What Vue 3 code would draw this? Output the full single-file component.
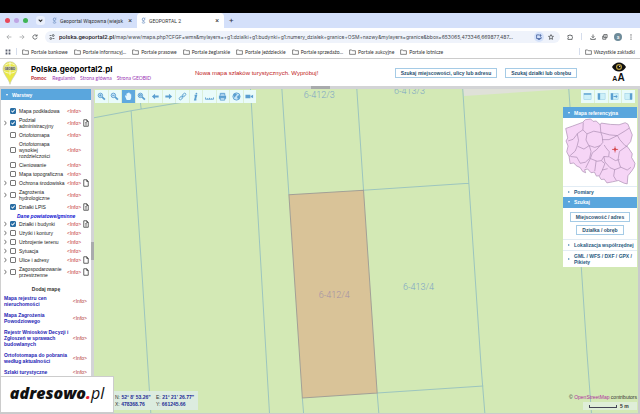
<script setup>
import { ref } from 'vue'

const bookmarks = [
  'Portale bankowe', 'Portale informacyj...', 'Portale prasowe', 'Portale żeglarskie',
  'Portale jeździeckie', 'Portale sprzedażo...', 'Portale aukcyjne', 'Portale lotnicze'
]
const url = 'polska.geoportal2.pl/map/www/mapa.php?CFGF=wms&mylayers=+g1:dzialki+g1:budynki+g1:numery_dzialek+granice+OSM+nazwy&mylayers=granice&bbox=653065,473346,669877,487...'
const urlHost = url.slice(0, 20)
const urlPath = url.slice(20)

const layers = ref([
  { name: 'Mapa podkładowa', on: true },
  { name: 'Podział\nadministracyjny', on: true, more: true, doc: 'full' },
  { name: 'Ortofotomapa', on: false },
  { name: 'Ortofotomapa\nwysokiej\nrozdzielczości', on: false },
  { name: 'Cieniowanie', on: false },
  { name: 'Mapa topograficzna', on: false },
  { name: 'Ochrona środowiska', on: false, more: true, doc: 'empty' },
  { name: 'Zagrożenia\nhydrologiczne', on: false, more: true },
  { name: 'Działki LPIS', on: true, doc: 'full' },
  { heading: 'Dane powiatowe/gminne' },
  { name: 'Działki i budynki', on: true, more: true, doc: 'full' },
  { name: 'Użytki i kontury', on: false, more: true },
  { name: 'Uzbrojenie terenu', on: false, more: true },
  { name: 'Sytuacja', on: false, more: true },
  { name: 'Ulice i adresy', on: false, more: true, doc: 'empty' },
  { name: 'Zagospodarowanie\nprzestrzenne', on: false, more: true, doc: 'empty' }
])

const extraMaps = [
  'Mapa rejestru cen\nnieruchomości',
  'Mapa Zagrożenia\nPowodziowego',
  'Rejestr Wniosków Decyzji i\nZgłoszeń w sprawach\nbudowlanych',
  'Ortofotomapa do pobrania\nwedług aktualności',
  'Szlaki turystyczne'
]

const tools = ['zoomin', 'zoomout', 'pan', 'zoombox', 'back', 'forward', 'link', 'info', 'measure', 'print', 'globe', 'video']
const activeTool = ref('pan')
const views = ['top', 'left', 'export', 'right']
</script>

<template>
  <div class="screen">
    <div class="bezel"></div>

    <div class="tabs">
      <div class="lights"><i class="red"></i><i class="lilac"></i><i class="green"></i></div>
      <button class="tablist" aria-label="Karty">
        <svg viewBox="0 0 10 10"><path d="M3 4l2 2 2-2" fill="none" stroke="#333" stroke-width="1.2" /></svg>
      </button>
      <div class="tab">
        <svg class="fav" viewBox="0 0 8 10"><circle cx="4" cy="3" r="2" /><path d="M6 1h1M3 5c-2 2 3 1 3 3s-5 1.500-4-.5" /></svg>
        <span class="tabname">Geoportal Wiązowna (wiejsk</span>
        <button class="close" aria-label="Zamknij">×</button>
      </div>
      <div class="tab active">
        <svg class="fav" viewBox="0 0 8 10"><circle cx="4" cy="3" r="2" /><path d="M6 1h1M3 5c-2 2 3 1 3 3s-5 1.500-4-.5" /></svg>
        <span class="tabname">GEOPORTAL 2</span>
        <button class="close" aria-label="Zamknij">×</button>
      </div>
      <button class="newtab" aria-label="Nowa karta">+</button>
    </div>

    <div class="address">
      <button class="nav dim" aria-label="Wstecz"><svg viewBox="0 0 10 10"><path d="M9 5H1.500M5 1.500L1.500 5 5 8.500" /></svg></button>
      <button class="nav dim" aria-label="Dalej"><svg viewBox="0 0 10 10"><path d="M1 5h7.500M5 1.500L8.500 5 5 8.500" /></svg></button>
      <button class="nav" aria-label="Odśwież"><svg viewBox="0 0 10 10"><path d="M8.500 6A3.600 3.600 0 1 1 8 3M8.500 .8v2.700H5.800" /></svg></button>
      <div class="pill">
        <svg class="tune" viewBox="0 0 10 10"><path d="M1 2.500h3M6 7.500h3" /><circle cx="7" cy="2.500" r="1.500" /><circle cx="3" cy="7.500" r="1.500" /></svg>
        <div class="url"><b>{{ urlHost }}</b>{{ urlPath }}</div>
        <span class="halo"><svg viewBox="0 0 10 10"><path d="M6 1.500H1v6h7.500V5M3 9.300h4M7.500 .5v3M6 2.500l1.500 1.500L9 2.500" /></svg></span>
        <svg class="star" viewBox="0 0 10 10"><path d="M5 1l1.200 2.700 2.900.3-2.200 2 .7 2.900L5 7.400 2.400 8.900l.7-2.900-2.200-2 2.900-.3z" /></svg>
      </div>
      <div class="actions">
        <svg viewBox="0 0 10 10"><path d="M1.500 2.500h2.300a1.200 1.200 0 0 1 2.400 0h2.300v2.200a1.200 1.200 0 0 1 0 2.200V9h-7V6.800a1.200 1.200 0 0 0 0-2.200z" /></svg>
        <i class="bar"></i>
        <svg viewBox="0 0 10 10"><path d="M5 .8v5M2.800 4L5 6.200 7.200 4M1.200 6.800V9h7.600V6.800" /></svg>
        <svg viewBox="0 0 10 10"><path d="M3 1h5.500v5H3zM6.500 6v2.700H1.200V3.500H3M4.500 3.500h2.500" /></svg>
        <span class="avatar">a</span>
        <svg viewBox="0 0 10 10" class="dots"><circle cx="5" cy="1.500" r="1" /><circle cx="5" cy="5" r="1" /><circle cx="5" cy="8.500" r="1" /></svg>
      </div>
    </div>

    <nav class="bookmarks">
      <svg class="apps" viewBox="0 0 10 10"><path d="M1 1h3v3H1zM6 1h3v3H6zM1 6h3v3H1zM6 6h3v3H6z" /></svg>
      <i class="bar"></i>
      <a v-for="b in bookmarks" :key="b" href="#">
        <svg viewBox="0 0 12 10"><path d="M1 1.500h3.500l1.200 1.300H11V9H1z" /></svg>{{ b }}
      </a>
      <i class="bar last"></i>
      <a href="#"><svg viewBox="0 0 12 10"><path d="M1 1.500h3.500l1.200 1.300H11V9H1z" /></svg>Wszystkie zakładki</a>
    </nav>

    <header class="site">
      <svg class="pin" viewBox="0 0 48 72">
        <path d="M24 70C20 52 3 40 3 23a21 21 0 0 1 42 0c0 17-17 29-21 47z" fill="#e9e843" stroke="#c9cbb4" stroke-width="2" />
        <path d="M8 14c8-8 24-9 32 0M7 31c9 7 25 7 34 0M24 3v40" fill="none" stroke="#f8f8c8" stroke-width="3" />
        <rect x="7" y="16" width="34" height="12" fill="#d8d9b4" />
        <text x="24" y="26" text-anchor="middle">GEOBID</text>
      </svg>
      <div class="brand">
        <h1>Polska.geoportal2.pl</h1>
        <div class="links">
          <a class="help" href="#">Pomoc</a><a href="#">Regulamin</a><a href="#">Strona główna</a><a href="#">Strona GEOBID</a>
        </div>
      </div>
      <a class="news" href="#">Nowa mapa szlaków turystycznych. Wypróbuj!</a>
      <div class="searches">
        <button class="box">Szukaj miejscowości, ulicy lub adresu</button>
        <button class="box">Szukaj działki lub obrębu</button>
      </div>
      <div class="access">
        <svg viewBox="0 0 42 28"><path d="M0 14C10-4 32-4 42 14 32 32 10 32 0 14z" fill="#111" /><circle cx="21" cy="14" r="9" fill="#b89b3c" /><circle cx="21" cy="14" r="5.500" fill="#111" /><circle cx="23" cy="12" r="2" fill="#fff" /></svg>
        <span><small>A</small>A</span>
      </div>
    </header>
    <div class="split-h"><i></i></div>

    <main>
      <aside>
        <div class="bluebar">Warstwy</div>
        <div class="layers">
          <template v-for="(l, i) in layers" :key="i">
            <div v-if="l.heading" class="heading">{{ l.heading }}</div>
            <div v-else class="layer">
              <button v-if="l.more" class="more" aria-label="Rozwiń"><svg viewBox="0 0 4 8"><path d="M.5 1L3 4 .5 7" /></svg></button>
              <input :id="'l' + i" v-model="l.on" type="checkbox">
              <label :for="'l' + i">{{ l.name }}</label>
              <a class="info" href="#">&lt;Info&gt;</a>
              <svg v-if="l.doc" class="doc" viewBox="0 0 12 16"><path d="M1.500 1.500h6l3 3.500v9.500h-9zM7.500 1.500V5h3" /><path v-if="l.doc === 'full'" class="rows" d="M4 7h4M4 9.500h4M4 12h4" /></svg>
            </div>
          </template>
        </div>
        <h2>Dodaj mapę</h2>
        <div class="extras">
          <div v-for="m in extraMaps" :key="m" class="extra">
            <a href="#">{{ m }}</a><a class="info" href="#">&lt;Info&gt;</a>
          </div>
        </div>
      </aside>
      <div class="split-v"><i></i></div>

      <section class="map">
        <svg class="parcels" viewBox="94 89 544 323" preserveAspectRatio="xMinYMin slice">
          <path d="M461.500 89H567L463 96z" fill="#dfe1d8" />
          <path d="M288.300 194.300L362.700 190 376.300 392 301.700 397z" fill="#d9c398" />
          <g class="lines">
            <path d="M94 117.700L131 110.700 190 101M140 100L141 109M131 110.700L136 185 142.300 280 150.700 413" />
            <path d="M250 89L255.700 185 269 413M281.300 89L288.300 194.300" />
            <path d="M356 89L362.700 190 467.700 183M461.600 89L467.700 183 480 367 483.700 413" />
            <path d="M301.700 397L303 413M376.300 392L378 413M376.300 392L482 385" />
            <path d="M567.300 89L580 270 585.300 350 590 413" />
          </g>
          <path d="M288.300 194.300L362.700 190 376.300 392 301.700 397z" fill="none" stroke="#a2a096" />
          <g class="numbers">
            <text x="303" y="98">6-412/3</text>
            <text x="393" y="94">6-413/3</text>
            <text x="402" y="289">6-413/4</text>
            <text x="318" y="297" class="own">6-412/4</text>
          </g>
        </svg>

        <div class="toolbar">
          <button v-for="t in tools" :key="t" :class="{ on: t === activeTool }" :aria-label="t" @click="activeTool = t">
            <svg viewBox="0 0 20 20">
              <template v-if="t.startsWith('zoom')">
                <path d="M11 11l6.500 6" class="thick" /><circle cx="7.500" cy="7.500" r="5" fill="#c9e6f8" />
                <path v-if="t === 'zoomin'" d="M5 7.500h5M7.500 5v5" /><path v-else-if="t === 'zoomout'" d="M5 7.500h5" /><path v-else d="M5.500 6h4v3h-4z" />
              </template>
              <path v-else-if="t === 'pan'" class="hand" d="M6 18L3 11 2 8l2-.5 1.500 2V3.500h2V2h2.200V1h2.300v2h2v2h2v8l-2 5z" />
              <path v-else-if="t === 'back'" class="solid" d="M2 10l7-6v4h8v4H9v4z" />
              <path v-else-if="t === 'forward'" class="solid" d="M18 10l-7-6v4H3v4h8v4z" />
              <g v-else-if="t === 'link'"><ellipse cx="6.500" cy="13.500" rx="4.500" ry="2.800" transform="rotate(-45 6.500 13.500)" /><ellipse cx="13.500" cy="6.500" rx="4.500" ry="2.800" transform="rotate(-45 13.500 6.500)" /><path d="M8 12l4-4" /></g>
              <g v-else-if="t === 'info'"><circle cx="12" cy="3.500" r="2" class="solid" /><path d="M8 8h3.500L9 17h3" class="thick" /></g>
              <path v-else-if="t === 'measure'" d="M1 12v4h18v-4M5.500 14v2M10 13v3M14.500 14v2" />
              <g v-else-if="t === 'print'"><path class="solid" d="M2 8h16v7H2z" /><path d="M5 8V3h10v5" fill="#a8d0ee" /><path d="M5 13h10v5H5z" fill="#d9f0fb" /></g>
              <g v-else-if="t === 'globe'"><circle cx="10" cy="10" r="8" fill="#c5e4f7" /><path class="solid" d="M4 5l5-2 2 3-3 3-2 4-3-4zM12 9l5-3 .5 6-4 4-2-4z" /></g>
              <path v-else class="solid" d="M1 6h11v8H1zM13 9l5-3v8l-5-3z" />
            </svg>
          </button>
        </div>

        <div class="right">
          <div class="toolbar views">
            <button v-for="v in views" :key="v" :aria-label="v">
              <svg viewBox="0 0 20 20">
                <rect x="2" y="3" width="16" height="14" fill="#cdf0f8" stroke="#8cc4e0" />
                <path v-if="v === 'top'" class="solid" d="M2 3h16v3H2z" />
                <path v-else-if="v === 'left'" class="solid" d="M2 3h5v14H2z" />
                <path v-else-if="v === 'export'" class="solid" d="M2 3h5v14H2zM8 9h5V6l4 4-4 4v-3H8z" />
                <path v-else class="solid" d="M13 3h5v14h-5z" />
              </svg>
            </button>
          </div>
          <div class="panel">
            <div class="bluebar">Mapa referencyjna</div>
            <svg class="poland" viewBox="24 101 219 200">
              <path class="land" d="M32 132L52 125 82 114 90 106 106 104 113 111 122 110 134 121 137 116 165 120 190 121 208 115 216 119 229 151 224 171 213 184 220 193 229 207 227 218 237 235 235 246 228 257 216 272 214 296 205 294 188 286 170 290 154 293 146 282 137 283 130 272 123 273 117 261 107 263 97 252 88 254 91 263 82 259 75 248 63 242 56 234 45 236 42 215 35 201 39 184 33 169 38 160z" />
              <path d="M84 114l-1 22-15 10-14 18-15 5M83 136l12 12 20-8 20 4M134 120l2 24M95 148l-3 18 8 16 18 6 16-5 8-10-2-18-4-11M136 144l26 7 23 2 23-14 12-8M66 147l4 20-5 20-5 12-18 16M68 185l18 8 15-10M102 183l5 17-4 20-13 12-15 3-10-18-19-2M134 182l-10 12-13 10-6 17 20 8 13-2 7-12 14 1 2-15-10-12-5-8M140 165l20 0 25-12 7 12 15 17 7 4M213 184l-22 16-4 24 7 22 20 9 11-8M161 216l18 11 12-3M145 215l3 16 15 17 14 6 18-7M105 221l-14 28M122 228l-4 30M138 228l10 8-8 20-8 16M140 255l16-4M177 253l-3 20 8 13" />
              <path d="M169 194h18M178 185v18" class="cross" /><circle cx="178" cy="194" r="3" class="cross" />
            </svg>
            <div class="fold">Pomiary</div>
            <div class="bluebar">Szukaj</div>
            <div class="finders">
              <button class="box">Miejscowość / adres</button>
              <button class="box">Działka / obręb</button>
            </div>
            <div class="fold">Lokalizacja współrzędnej</div>
            <div class="fold">GML / WFS / DXF / GPX / Pikiety</div>
          </div>
        </div>

        <div class="coords">
          <span>N: <b>52° 8' 53.26"</b></span><span>E: <b>21° 21' 26.77"</b></span>
          <span>X: <b>478368.76</b></span><span>Y: <b>661245.66</b></span>
        </div>
        <div class="credit">
          <div>© <a href="#">OpenStreetMap</a> contributors</div>
          <div class="scale"><i></i>5 m</div>
        </div>
      </section>
    </main>

    <div class="watermark"><b>adresowo<em>.</em></b>pl</div>
  </div>
</template>

<style>
body { margin: 0; background: #cfd0d2; }
</style>

<style scoped>
* { box-sizing: border-box; }
.screen { position: relative; display: flex; flex-direction: column; height: 100vh; overflow: hidden; padding-bottom: 1px; background: #c9cacc; font: 5px/6px "Liberation Sans", Arial, sans-serif; color: #333; }
button { font: inherit; color: inherit; margin: 0; padding: 0; border: 0; background: none; }
a { color: inherit; text-decoration: none; }
svg { display: block; flex: none; }
.bezel { height: 13px; flex: none; background: #000; }

.tabs { display: flex; align-items: stretch; height: 15px; flex: none; background: #d4e0fa; font-family: Roboto, sans-serif; }
.lights { display: flex; align-items: center; gap: 4px; padding: 0 8px 0 5px; }
.lights i { width: 5px; height: 5px; border-radius: 50%; }
.red { background: #e8485a; } .lilac { background: #c0a5e4; } .green { background: #3fb455; }
.tablist { align-self: center; width: 9px; height: 9px; border-radius: 3px; background: #eaf0fd; margin-right: 6px; }
.tablist svg { width: 9px; height: 9px; }
.tab { display: flex; align-items: center; gap: 3px; width: 86px; padding: 0 5px 0 1px; }
.tab.active { width: 87px; padding-left: 4px; background: #fff; border-radius: 4px 4px 0 0; }
.fav { width: 5px; height: 7px; fill: none; stroke: #6b8fc0; stroke-width: 1.200px; }
.tabname { flex: 1; white-space: nowrap; }
.close { font-size: 7px; }
.newtab { font-size: 8px; padding: 0 5px; color: #334; }

.address { display: flex; align-items: center; height: 17px; flex: none; background: #fff; padding: 0 6px; font-family: Roboto, sans-serif; }
.address svg { width: 6px; height: 6px; fill: none; stroke: #3c4043; stroke-width: 1.200px; }
.nav { width: 13px; }
.dim { opacity: .5; }
.pill { flex: 1; min-width: 0; display: flex; align-items: center; height: 12px; border-radius: 6px; background: #eff3fb; padding: 0 6px 0 4px; gap: 4px; }
.url { flex: 1; min-width: 0; white-space: nowrap; overflow: hidden; font: 5px/8px Inter, sans-serif; color: #44484e; }
.url b { font: 500 6px Roboto, sans-serif; color: #1f2023; }
.halo { padding: 2px; border-radius: 5px; background: #d5e2fa; }
.halo svg { stroke: #2d4d90; }
.actions { display: flex; align-items: center; gap: 6px; padding-left: 7px; }
.actions .bar { margin: 0 2px; }
.bar { width: 1px; height: 7px; background: #d5ddec; flex: none; }
.avatar { width: 8px; height: 8px; border-radius: 50%; background: #6e8b99; color: #fff; text-align: center; line-height: 8px; }
.address .dots { fill: #3c4043; stroke: none; }

.bookmarks { display: flex; align-items: center; gap: 6px; height: 14px; flex: none; background: #fff; border-bottom: 1px solid #ccc; padding: 0 5px; font-family: Lato, sans-serif; white-space: nowrap; }
.bookmarks a { display: flex; align-items: center; gap: 2px; }
.bookmarks a svg { width: 7px; height: 6px; fill: none; stroke: #555; stroke-width: 1.200px; }
.bookmarks .bar { margin: 0 -1px; }
.bookmarks .last { margin-left: auto; }
.apps { width: 6px; height: 6px; fill: #5a6070; }

.site { display: flex; align-items: center; height: 27px; flex: none; background: #fff; padding-left: 2px; }
.pin { width: 16px; height: 24px; }
.pin text { font: bold 8px "Liberation Sans", sans-serif; fill: #444; }
.brand { width: 177px; padding-left: 13px; }
h1 { margin: 0; font: bold 8px/10px Inter, "Liberation Sans", sans-serif; color: #000; }
.links { display: flex; gap: 5px; font-family: Lato, sans-serif; line-height: 8px; color: #9a35b4; white-space: nowrap; }
.help { color: #b8232b; font-weight: bold; margin-right: 1px; }
.news { font-size: 6px; line-height: 8px; color: #c02020; white-space: nowrap; }
.searches { display: flex; gap: 8px; margin-left: auto; }
.box { height: 10px; padding: 0 5px; border: 1px solid #a5cbe6; background: #fff; color: #285070; font-weight: bold; line-height: 8px; white-space: nowrap; }
.access { display: flex; flex-direction: column; align-items: center; width: 15px; margin: 0 14px 0 34px; color: #111; font: bold 10px/11px "Liberation Sans", sans-serif; }
.access svg { width: 14px; height: 10px; }
.access span { display: block; white-space: nowrap; }
.access small { font-size: 7px; }
.split-h { height: 3px; flex: none; background: #d3d4d6; display: flex; justify-content: center; }
.split-h i { width: 19px; background: #a9abad; }

main { flex: 1; min-height: 0; display: grid; grid-template-columns: 91px 3px 1fr; padding-right: 2px; }
aside { background: #fff; border-left: 1px solid #d0d0d0; overflow: hidden; }
.bluebar { display: flex; align-items: center; height: 11px; padding: 0 5px; gap: 4px; background: #5aa6dd; color: #fff; font-weight: bold; }
.bluebar::before { content: ""; border: 1px solid transparent; border-top: 2px solid #fff; border-bottom: 0; }
.layers { padding-top: 7px; }
.layer { display: grid; grid-template-columns: 6px 9px 48px 16px 7px; align-items: center; padding: 1px 0 2px 3px; min-height: 9px; color: #222; }
.more { grid-column: 1; width: 3px; }
.more svg { width: 3px; height: 6px; fill: none; stroke: #444; stroke-width: 1px; }
.layer input { grid-column: 2; appearance: none; width: 6px; height: 6px; margin: 0; border: 1px solid #777; border-radius: 1px; background: #fff; }
.layer input:checked { border-color: #2a6ea4; background: #2a6ea4; }
.layer input:checked::before { content: ""; display: block; width: 4px; height: 4px; background: #fff; clip-path: polygon(0 50%, 18% 35%, 40% 60%, 85% 8%, 100% 25%, 42% 92%); }
.layer label { white-space: pre; }
.info { color: #c03030; }
.doc { width: 6px; height: 8px; margin: -1px 0; fill: #fff; stroke: #333; stroke-width: 1.500px; }
.rows { stroke-width: 1px; }
.heading { height: 8px; padding: 1px 0 0 16px; line-height: 6px; font-weight: bold; font-style: italic; color: #1010d0; white-space: nowrap; }
h2 { margin: 5px 0 2px; font: bold 5px/8px "Liberation Sans", sans-serif; text-align: center; color: #333; }
.extras { display: flex; flex-direction: column; gap: 5px; padding: 0 4px 0 3px; }
.extra { display: flex; align-items: center; justify-content: space-between; white-space: pre; font-weight: bold; color: #2424b4; }
.extra .info { font-weight: normal; color: #b03030; }
.split-v { background: #d3d4d6; display: flex; align-items: center; }
.split-v i { width: 3px; height: 18px; background: #a9abad; }

.map { position: relative; overflow: hidden; background: #d3e9b5; }
.parcels { position: absolute; width: 100%; height: 100%; }
.lines { fill: none; stroke: #9cc5be; stroke-width: 1px; }
.numbers { font: 300 9px Roboto, sans-serif; fill: #7ea6c4; }
.own { fill: #a492a6; }
.toolbar { display: grid; grid-template-columns: repeat(12, 1fr); gap: 1px; width: 161px; position: absolute; top: 1px; left: 1px; background: #dcefd8; }
.toolbar button { display: flex; align-items: center; justify-content: center; height: 13px; background: #e9fbfa; }
.toolbar svg { width: 9px; height: 9px; fill: none; stroke: #5b9fd0; stroke-width: 2px; }
.toolbar .thick { stroke-width: 4px; }
.toolbar .solid { fill: #5b9fd0; stroke: none; }
.toolbar .on { background: #5fa9de; }
.toolbar .hand { fill: #e6f8ff; stroke: none; }
.right { position: absolute; top: 1px; right: 1px; width: 74px; }
.toolbar.views { position: static; grid-template-columns: repeat(4, 1fr); width: 54px; margin: 0 2px 4px auto; }
.toolbar.views rect { stroke-width: 1px; }
.panel { background: #fff; color: #285a80; font-weight: bold; }
.poland { width: 100%; height: auto; fill: none; stroke: #a98bb0; stroke-width: 2px; stroke-linejoin: round; }
.land { fill: #f6d5f6; }
.poland .cross { stroke: #d03030; stroke-width: 2px; }
.fold { display: flex; align-items: center; gap: 4px; min-height: 11px; padding: 2px 0 2px 5px; border-top: 1px solid #e2ecf4; }
.fold::before { content: ""; flex: none; border: 1px solid transparent; border-left: 2px solid #5a90b8; border-right: 0; }
.finders { display: flex; flex-direction: column; align-items: center; gap: 3px; padding: 4px 0; }

.coords { position: absolute; left: 18px; bottom: 3px; display: grid; grid-template-columns: 41px 41px; gap: 1px 0; padding: 3px 1px 3px 3px; background: #dcecdf; color: #333; white-space: nowrap; }
.coords b { color: #1c2c96; }
.credit { position: absolute; right: 1px; bottom: 3px; display: flex; flex-direction: column; align-items: flex-end; gap: 2px; color: #333; }
.credit a { color: #b030a0; }
.scale { display: flex; align-items: center; gap: 3px; width: 54px; height: 8px; padding-left: 6px; background: #dfeed8; font-weight: bold; }
.scale i { width: 28px; height: 3px; border: 1px solid #445; border-top: 0; }

.watermark { position: absolute; left: 0; bottom: 1px; width: 114px; height: 37px; padding-top: 4px; border: 1px solid #ccc; background: #fff; color: #111; text-align: center; font: italic 16px/24px "Open Sans", sans-serif; white-space: nowrap; }
.watermark b { font-weight: 800; }
.watermark em { color: #e02030; }
</style>
